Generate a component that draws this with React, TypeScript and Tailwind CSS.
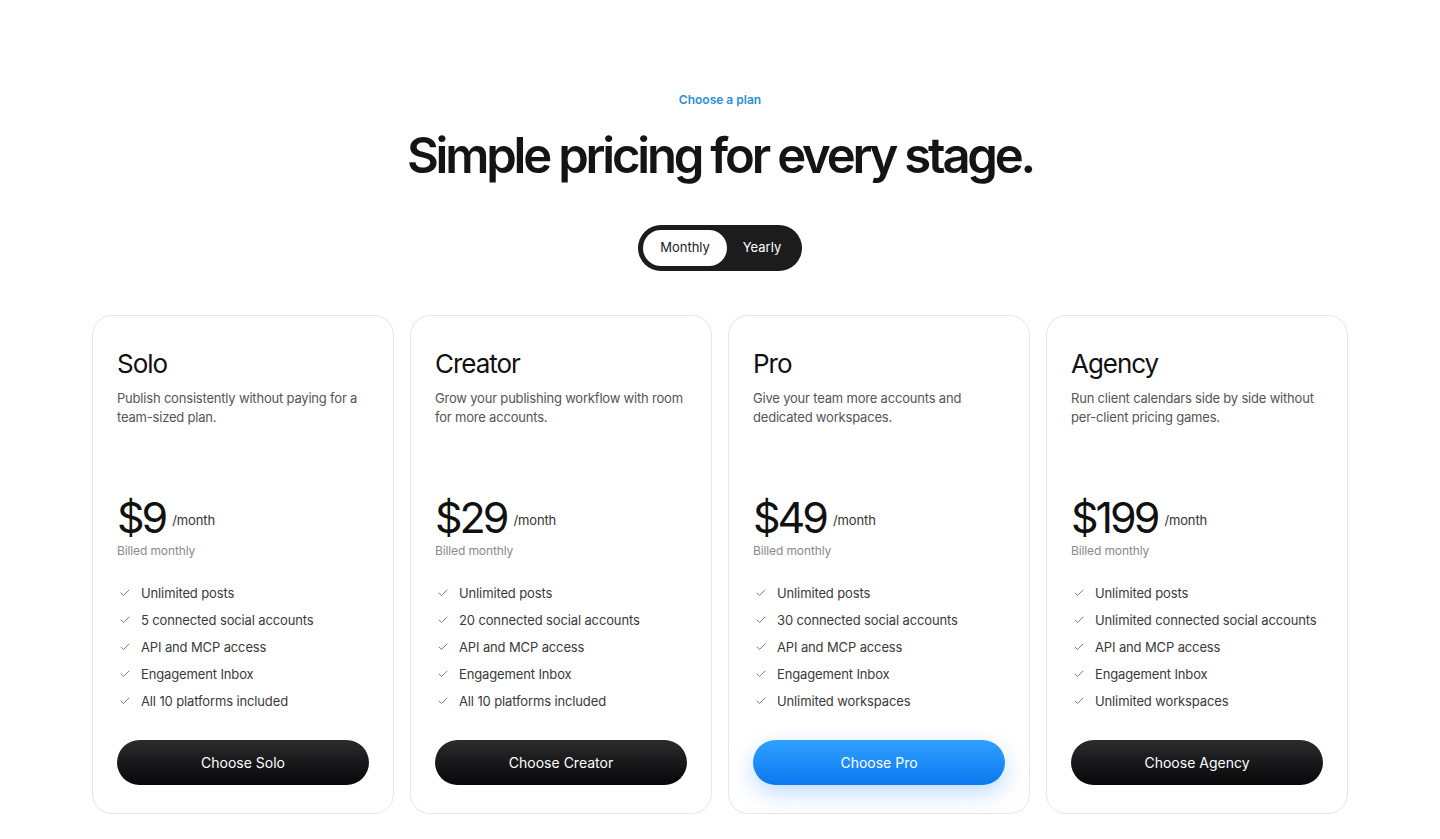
import { Check } from "lucide-react";

type Plan = {
  name: string;
  description: string;
  price: string;
  features: string[];
  highlight?: boolean;
};

const plans: Plan[] = [
  {
    name: "Solo",
    description: "Publish consistently without paying for a team-sized plan.",
    price: "$9",
    features: [
      "Unlimited posts",
      "5 connected social accounts",
      "API and MCP access",
      "Engagement Inbox",
      "All 10 platforms included",
    ],
  },
  {
    name: "Creator",
    description: "Grow your publishing workflow with room for more accounts.",
    price: "$29",
    features: [
      "Unlimited posts",
      "20 connected social accounts",
      "API and MCP access",
      "Engagement Inbox",
      "All 10 platforms included",
    ],
  },
  {
    name: "Pro",
    description: "Give your team more accounts and dedicated workspaces.",
    price: "$49",
    features: [
      "Unlimited posts",
      "30 connected social accounts",
      "API and MCP access",
      "Engagement Inbox",
      "Unlimited workspaces",
    ],
    highlight: true,
  },
  {
    name: "Agency",
    description: "Run client calendars side by side without per-client pricing games.",
    price: "$199",
    features: [
      "Unlimited posts",
      "Unlimited connected social accounts",
      "API and MCP access",
      "Engagement Inbox",
      "Unlimited workspaces",
    ],
  },
];

function PlanCard({ plan }: { plan: Plan }) {
  return (
    <div className="flex flex-col rounded-[20px] border border-[#e6e6e8] bg-white px-6 pt-8 pb-7">
      <h3 className="text-[26px] leading-8 font-normal tracking-[-0.04em] text-[#111]">{plan.name}</h3>
      <p className="mt-[9px] min-h-[106px] text-[13px] leading-[19px] tracking-[-0.015em] text-[#555]">
        {plan.description}
      </p>
      <div className="flex items-center gap-[7px]">
        <span className="text-[43px] leading-[44px] font-normal tracking-[-0.07em] text-[#111]">{plan.price}</span>
        <span className="pt-2 text-[13px] tracking-[-0.01em] text-[#333]">/month</span>
      </div>
      <p className="mt-1 text-[12px] leading-4 tracking-[-0.01em] text-[#8a8a8e]">Billed monthly</p>
      <ul className="mt-6 flex flex-col gap-[7px]">
        {plan.features.map((f) => (
          <li
            key={f}
            className="flex items-center gap-[10px] text-[13px] leading-5 tracking-[-0.01em] text-[#3a3a3c]"
          >
            <Check className="ml-0.5 h-3 w-3 text-[#555]" strokeWidth={1.5} />
            {f}
          </li>
        ))}
      </ul>
      <button
        className={
          plan.highlight
            ? "mt-[29px] h-[45px] w-full rounded-full bg-gradient-to-b from-[#2fa0ff] to-[#0a78ee] text-[14px] text-white shadow-[0_8px_22px_rgba(20,130,255,0.28)]"
            : "mt-[29px] h-[45px] w-full rounded-full bg-gradient-to-b from-[#2c2c2f] to-[#08080a] text-[14px] text-white"
        }
      >
        Choose {plan.name}
      </button>
    </div>
  );
}

export default function App() {
  return (
    <div className="min-h-screen bg-white font-['Inter',sans-serif] antialiased">
      <div className="mx-auto flex max-w-[1256px] flex-col items-center pt-[92px]">
        <p className="text-[12px] leading-4 font-semibold text-[#2b8fd6]">Choose a plan</p>
        <h1 className="mt-[18px] text-[49px] leading-[60px] font-semibold tracking-[-0.065em] text-[#141416]">
          Simple pricing for every stage.
        </h1>
        <div className="mt-[39px] flex h-[46px] items-center rounded-full bg-[#1c1c1e] p-[5px]">
          <button className="h-9 w-[84px] rounded-full bg-white text-[13px] text-[#1c1c1e]">Monthly</button>
          <button className="h-9 w-[70px] text-[13px] text-white">Yearly</button>
        </div>
        <div className="mt-[44px] grid w-full grid-cols-4 gap-4">
          {plans.map((p) => (
            <PlanCard key={p.name} plan={p} />
          ))}
        </div>
      </div>
    </div>
  );
}
